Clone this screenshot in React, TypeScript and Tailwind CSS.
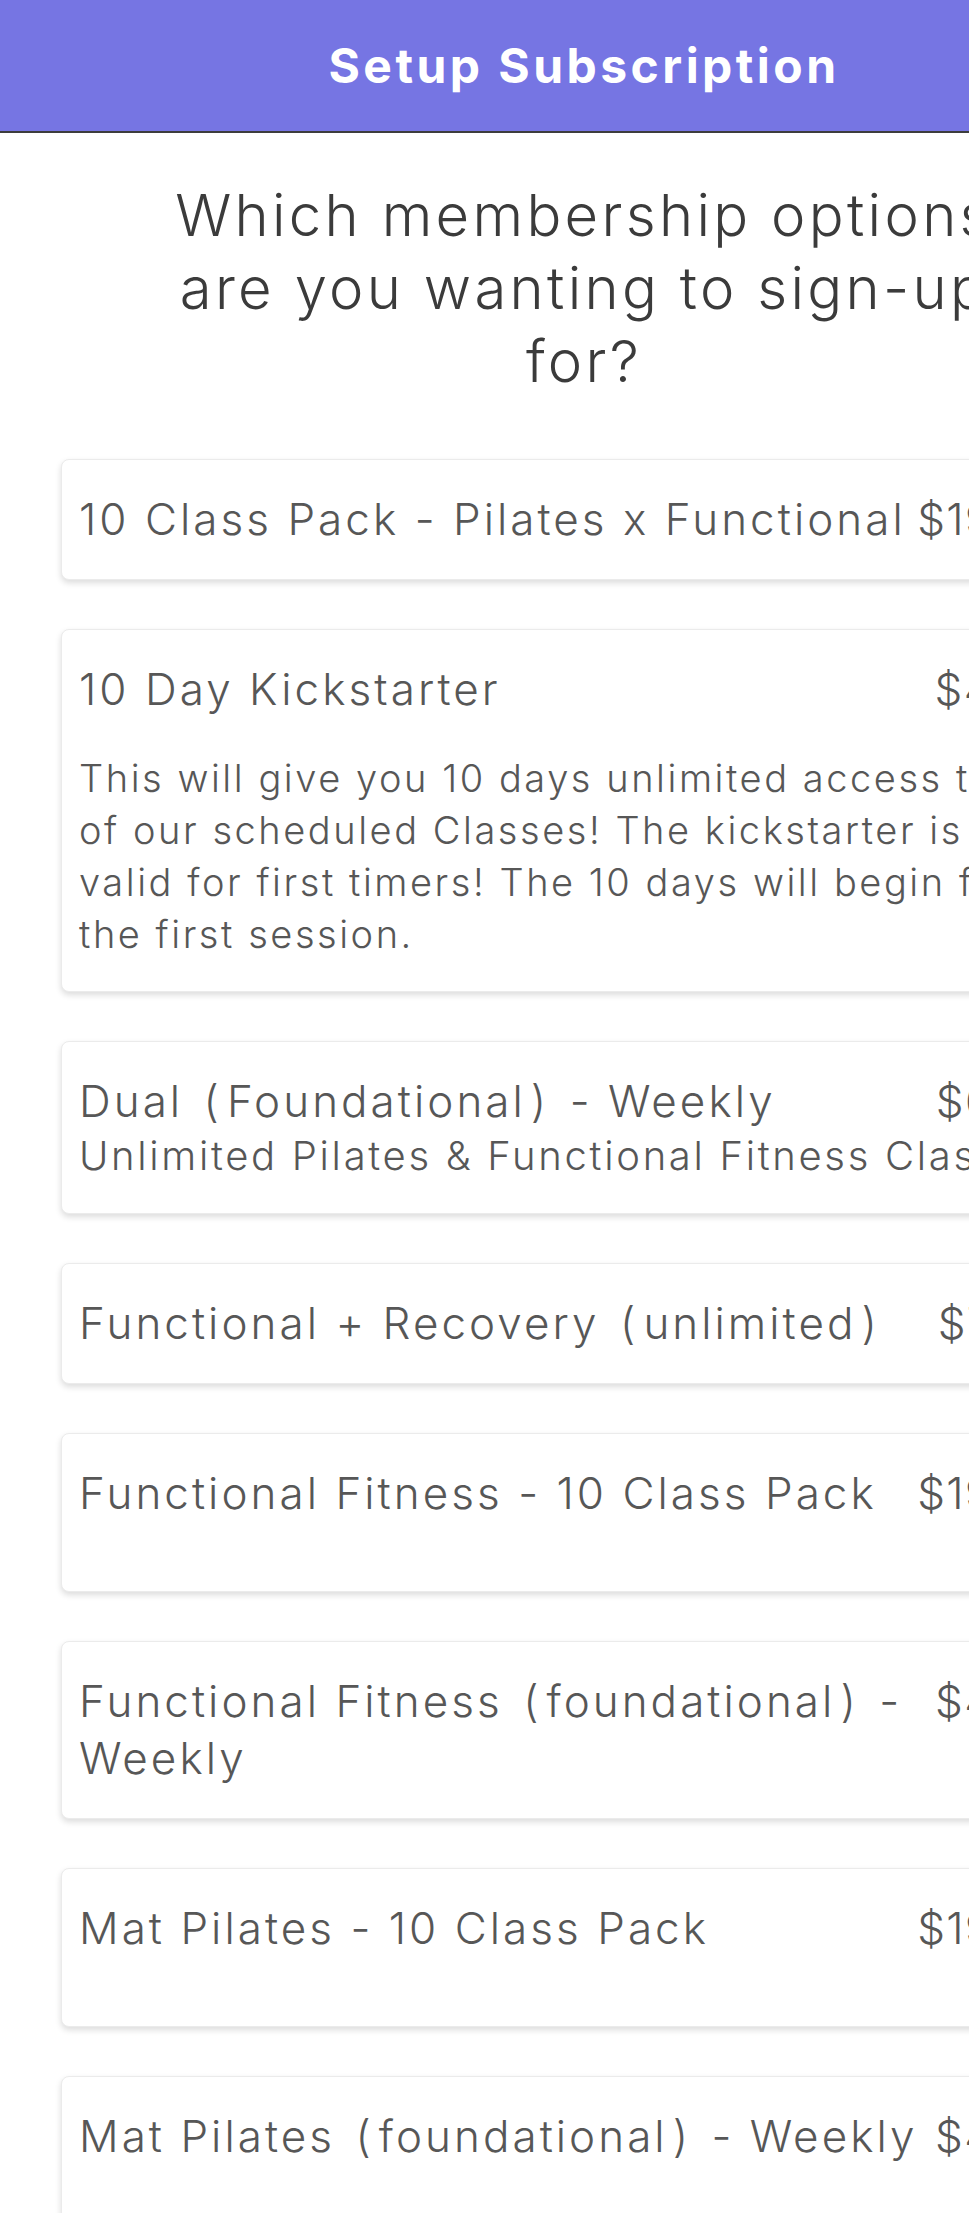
type Plan = {
  name: string;
  price: string;
  details?: string;
  note?: string;
  spacer?: boolean;
};

const plans: Plan[] = [
  { name: "10 Class Pack - Pilates x Functional", price: "$199.00" },
  {
    name: "10 Day Kickstarter",
    price: "$49.00",
    details:
      "This will give you 10 days unlimited access to all of our scheduled Classes! The kickstarter is only valid for first timers! The 10 days will begin from the first session.",
  },
  {
    name: "Dual (Foundational) - Weekly",
    price: "$69.00",
    note: "Unlimited Pilates & Functional Fitness Classes",
  },
  { name: "Functional + Recovery (unlimited)", price: "$70.00" },
  { name: "Functional Fitness - 10 Class Pack", price: "$199.00", spacer: true },
  { name: "Functional Fitness (foundational) - Weekly", price: "$45.00" },
  { name: "Mat Pilates - 10 Class Pack", price: "$199.00", spacer: true },
  { name: "Mat Pilates (foundational) - Weekly", price: "$45.00", spacer: true },
];

function withBrackets(text: string) {
  return text.split(/([()])/).map((part, i) =>
    part === "(" || part === ")" ? (
      <span key={i} className="mx-[5px]">
        {part}
      </span>
    ) : (
      part
    )
  );
}

function PlanCard({ plan }: { plan: Plan }) {
  return (
    <div className="rounded-[8px] border border-[#ebebeb] bg-white px-[17px] py-[31px] text-[#575757] shadow-[0_3px_6px_rgba(0,0,0,0.14)]">
      <div className="flex items-start justify-between gap-[6px]">
        <h3 className="text-[44px] font-light leading-[57px] tracking-[0.069em]">{withBrackets(plan.name)}</h3>
        <span className="shrink-0 text-[44px] font-light leading-[57px] tracking-[0.03em]">{plan.price}</span>
      </div>
      {plan.note && (
        <div className="text-[40px] font-light leading-[52px] tracking-[0.067em]">{plan.note}</div>
      )}
      {plan.details && (
        <p className="mt-[34px] text-[38px] font-light leading-[52px] tracking-[0.067em]">{plan.details}</p>
      )}
      {plan.spacer && <div className="h-[38px]" />}
    </div>
  );
}

export default function App() {
  return (
    <div className="h-screen w-full overflow-hidden bg-white font-['Inter','Liberation_Sans',sans-serif]">
      <div className="w-[1168px]">
        <header className="flex h-[133px] items-center justify-center border-b-2 border-[#3d3d3d] bg-[#7675e3]">
          <h1 className="text-[48px] font-bold tracking-[0.072em] text-white">Setup Subscription</h1>
        </header>
        <main className="px-[61px] pb-10">
          <h2 className="mx-auto mt-[46px] w-[870px] text-center text-[58px] font-light leading-[73px] tracking-[0.057em] text-[#3b3b3b]">
            Which membership options are you wanting to sign-up for?
          </h2>
          <div className="mt-[61px] flex flex-col gap-[49px]">
            {plans.map((plan) => (
              <PlanCard key={plan.name} plan={plan} />
            ))}
          </div>
        </main>
      </div>
    </div>
  );
}
